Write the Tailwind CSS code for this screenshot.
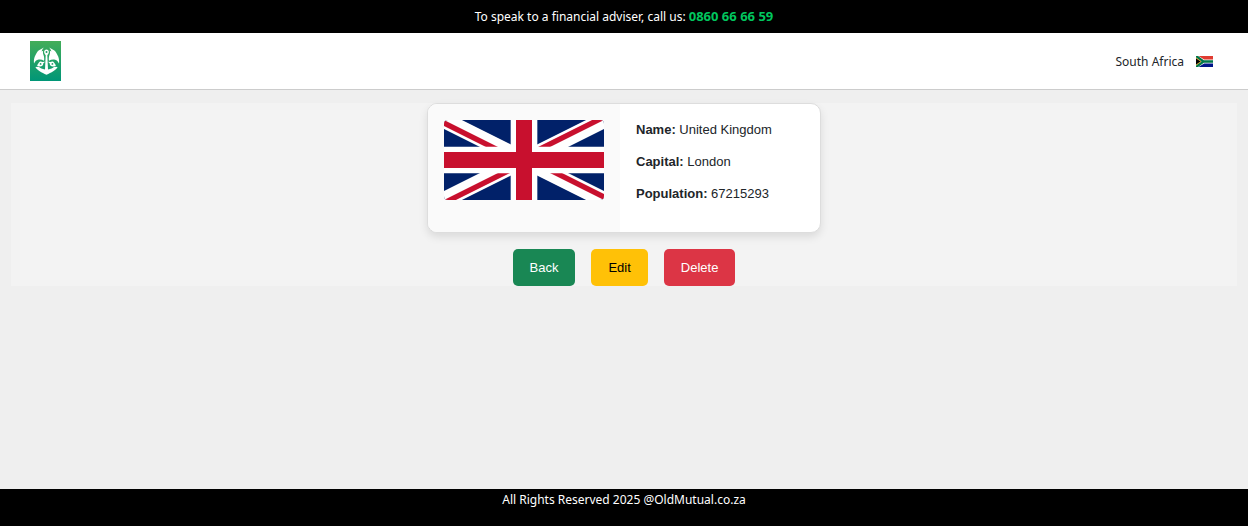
<!DOCTYPE html>
<html lang="en">
<head>
<meta charset="utf-8">
<meta name="viewport" content="width=device-width, initial-scale=1">
<title>Country details</title>
<script src="https://cdn.jsdelivr.net/npm/@tailwindcss/browser@4"></script>
</head>
<body class="flex min-h-screen flex-col bg-[#efefef] font-['Liberation_Sans',Arial,sans-serif] text-[13px] leading-5 text-[#212529]">
  <div class="bg-black py-1.5 text-center font-['Noto_Sans',sans-serif] text-[12px] leading-[21px] text-white">
    To speak to a financial adviser, call us: <a href="tel:0860666659" class="text-[13px] font-bold text-[#00c65e]">0860 66 66 59</a>
  </div>
  <header class="flex items-center justify-between border-b border-[#cccccc] bg-white py-2 pr-[35px] pl-[30px]">
    <a href="#" aria-label="Old Mutual home">
      <svg class="block h-10 w-[31px]" viewBox="0 0 31 40" aria-hidden="true">
        <defs><linearGradient id="logo-bg" x1="0" y1="0" x2="0" y2="1"><stop offset="0" stop-color="#43ad59"/><stop offset="1" stop-color="#009677"/></linearGradient></defs>
        <rect width="31" height="40" fill="url(#logo-bg)"/>
        <g fill="#fff">
          <path d="M15.2 5.8L8.6 9.4C7.2 10.6 6 12.8 4.8 15.4C3.9 17.6 3.7 20 4 22.6C5 20.6 6 19.2 7.8 18.8C10 18.3 12.2 18.6 14 19.8C14.4 17.8 14.2 16 13.6 14.2C12.9 12.8 12.8 11.2 13.2 9.8L11.6 10.4C12.2 8.4 13.2 6.8 15.2 5.8Z"/>
          <path d="M17.8 5.8L24.4 9.4C25.8 10.6 27 12.8 28.2 15.4C29.1 17.6 29.3 20 29 22.6C28 20.6 27 19.2 25.2 18.8C23 18.3 20.8 18.6 19 19.8C18.6 17.8 18.8 16 19.4 14.2C20.1 12.8 20.2 11.2 19.8 9.8L21.4 10.4C20.8 8.4 19.8 6.8 17.8 5.8Z"/>
          <path d="M16.5 8.4c1.4 0 2.4 1.2 2.4 2.6c0 1.2-.9 2.2-1.6 3.2l.7 14.2c2.8-.2 4.7-1 6.2-2.6l3.4.2c-1.6 3.2-6.3 5.6-11.1 7.8c-4.8-2.2-9.5-4.6-11.1-7.8l3.4-.2c1.5 1.6 3.4 2.4 6.2 2.6l.7-14.2c-.7-1-1.6-2-1.6-3.2c0-1.4 1-2.6 2.4-2.6Z"/>
          <path d="M15 20.8L12.6 21C11 20 9.6 20.4 8.8 21.8L7 24.4C8.4 25.6 11.2 25.8 12.6 24.4C13.2 23.8 13.2 23 13.2 22.4Z"/>
          <path d="M18 20.8L20.4 21C22 20 23.4 20.4 24.2 21.8L26 24.4C24.6 25.6 21.8 25.8 20.4 24.4C19.8 23.8 19.8 23 19.8 22.4Z"/>
        </g>
        <g fill="#239f68"><circle cx="16.5" cy="10.9" r="1"/><circle cx="10.6" cy="22.9" r=".9"/><circle cx="22.4" cy="22.9" r=".9"/></g>
      </svg>
    </a>
    <div class="flex items-center gap-3">
      <span class="pt-0.5 font-['Noto_Sans',sans-serif] text-[12px]">South Africa</span>
      <svg class="block h-[11px] w-[17px]" viewBox="0 0 17 11" role="img" aria-label="Flag of South Africa">
        <path fill="#fff" d="M0 0h17v11H0z"/>
        <path fill="#e03c31" d="M2.4 0H17v3.6H8.2L2.4 0z"/>
        <path fill="#001489" d="M2.4 11H17V7.4H8.2L2.4 11z"/>
        <path fill="none" stroke="#007749" stroke-width="2.4" d="M0 0l7.5 5.5L0 11M7.5 5.5H17"/>
        <path fill="#000" stroke="#c99a2a" d="M-1 1.2L5 5.5L-1 9.8z"/>
      </svg>
    </div>
  </header>

  <main class="mx-[11px] mt-[13px] mb-8 flex flex-col items-center gap-4 bg-[#f3f3f3]">
    <section class="flex w-[394px] max-w-full overflow-hidden rounded-[10px] border border-[#dddddd] bg-white shadow-[0_4px_8px_rgba(0,0,0,0.1)]">
      <div class="w-48 shrink-0 bg-[#fafafa] p-4">
        <svg class="block w-full rounded" viewBox="0 0 60 30" role="img" aria-label="Flag of the United Kingdom">
          <defs><clipPath id="saltire"><path d="M30 15h30v15zv15H0zH0V0zV0h30z"/></clipPath></defs>
          <path fill="#012169" d="M0 0h60v30H0z"/>
          <path stroke="#fff" stroke-width="6" d="M0 0l60 30M60 0L0 30"/>
          <path stroke="#c8102e" stroke-width="4" clip-path="url(#saltire)" d="M0 0l60 30M60 0L0 30"/>
          <path stroke="#fff" stroke-width="10" d="M30 0v30M0 15h60"/>
          <path stroke="#c8102e" stroke-width="6" d="M30 0v30M0 15h60"/>
        </svg>
      </div>
      <div class="flex-1 p-4">
        <p class="mb-3"><strong>Name:</strong> United Kingdom</p>
        <p class="mb-3"><strong>Capital:</strong> London</p>
        <p class="mb-3"><strong>Population:</strong> 67215293</p>
      </div>
    </section>
    <div class="flex gap-4">
      <button type="button" class="rounded-[5px] bg-[#198754] px-[17px] py-2 leading-[21px] text-white">Back</button>
      <button type="button" class="rounded-[5px] bg-[#ffc107] px-[17px] py-2 leading-[21px] text-black">Edit</button>
      <button type="button" class="rounded-[5px] bg-[#dc3545] px-[17px] py-2 leading-[21px] text-white">Delete</button>
    </div>
  </main>

  <footer class="mt-auto bg-black pb-4 text-center font-['Noto_Sans',sans-serif] text-[12px] leading-[21px] text-white">
    All Rights Reserved 2025 @OldMutual.co.za
  </footer>
</body>
</html>
